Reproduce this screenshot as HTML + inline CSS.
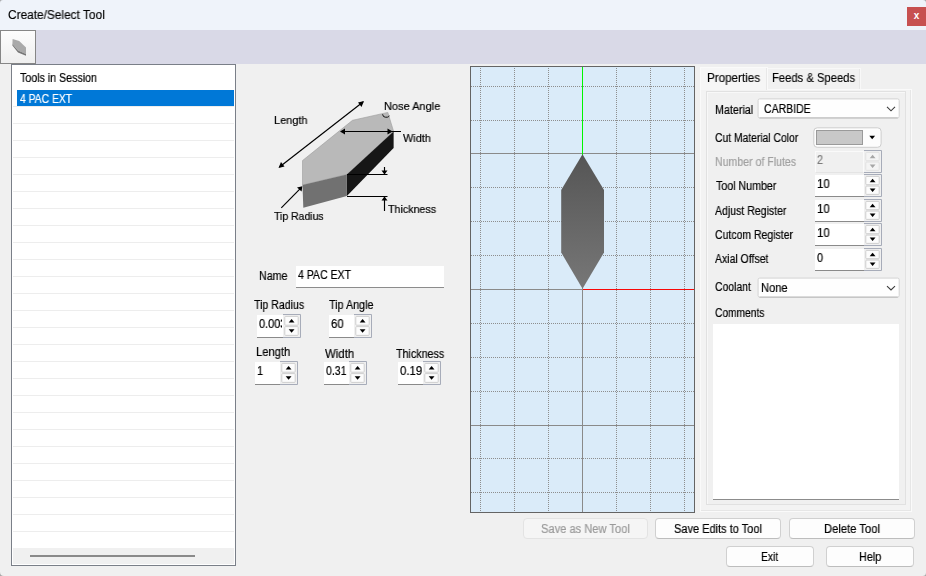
<!DOCTYPE html>
<html lang="en">
<head>
<meta charset="utf-8">
<title>Create/Select Tool</title>
<style>
*{box-sizing:border-box;margin:0;padding:0}
html,body{width:926px;height:576px;overflow:hidden;background:#f0f0f0}
body{position:relative;font-family:"Liberation Sans",sans-serif;font-size:12px;color:#000}
.a{position:absolute}
.t{position:absolute;will-change:transform;-webkit-text-stroke:0.2px currentColor;white-space:nowrap;line-height:14px;height:14px;transform-origin:0 50%}
.titlebar{left:0;top:0;width:926px;height:30px;background:#eff3fa}
.title{left:9px;top:8px;font-size:12.5px}
.close{left:907px;top:7px;width:19px;height:19px;background:#c75050;color:#fff;font-weight:bold;font-size:10px;text-align:center;line-height:17px}
.strip{left:0;top:30px;width:926px;height:34px;background:#d9d9e7}
.tab0{left:0;top:30px;width:36px;height:34px;border:1px solid #868686;background:linear-gradient(#fcfcfc,#efefef)}
.list{left:11px;top:64px;width:225px;height:502px;background:#fff;border:1px solid #7a7f88}
.row{position:absolute;left:1px;width:221px;height:1px;background:#ededed}
.sel{left:17px;top:90px;width:217px;height:16px;background:#0078d7}
.sbar{left:13px;top:548px;width:221px;height:16px;background:#f0f0f0}
.thumb{left:30px;top:555px;width:165px;height:2px;background:#8a8a8a}
.inp{position:absolute;background:#fff;border-bottom:1px solid #8c8c8c}
.grid{left:470px;top:66px;width:225px;height:447px;background:#daebf9;border:1px solid #646464;overflow:hidden}
.btn{position:absolute;height:21px;border:1px solid #d0d0d0;border-radius:4px;background:#fdfdfd;text-align:center;line-height:18px;white-space:nowrap;border-bottom-color:#bdbdbd}
.btn.dis{color:#9a9a9a;background:#f5f5f5;border-color:#e3e3e3}
.dd{position:absolute;height:20px;border:1px solid #d2d2d2;border-radius:2px;background:#fff}
.gray{color:#a0a0a0}
</style>
</head>
<body>
<div class="a titlebar"></div>
<div class="a close">x</div>
<div class="a strip"></div>
<div class="a tab0">
<svg class="a" style="left:0;top:0" width="34" height="32" viewBox="1 31 34 32"><polygon points="12.6,39 19.2,41 26,47.6 26,54 18,50.6 12.4,44" fill="#a9a9a9"/><polygon points="12.4,44 18,50.6 26,54 26,55.8 18,52.4 12.4,45.6" fill="#777"/></svg>
</div>

<!-- list -->
<div class="a list" id="list">
<div class="row" style="top:41px"></div>
<div class="row" style="top:58px"></div>
<div class="row" style="top:75px"></div>
<div class="row" style="top:92px"></div>
<div class="row" style="top:109px"></div>
<div class="row" style="top:126px"></div>
<div class="row" style="top:143px"></div>
<div class="row" style="top:160px"></div>
<div class="row" style="top:177px"></div>
<div class="row" style="top:194px"></div>
<div class="row" style="top:211px"></div>
<div class="row" style="top:228px"></div>
<div class="row" style="top:245px"></div>
<div class="row" style="top:262px"></div>
<div class="row" style="top:279px"></div>
<div class="row" style="top:296px"></div>
<div class="row" style="top:313px"></div>
<div class="row" style="top:330px"></div>
<div class="row" style="top:347px"></div>
<div class="row" style="top:364px"></div>
<div class="row" style="top:381px"></div>
<div class="row" style="top:398px"></div>
<div class="row" style="top:415px"></div>
<div class="row" style="top:432px"></div>
<div class="row" style="top:449px"></div>
<div class="row" style="top:466px"></div>
</div>
<div class="a sel"></div>
<div class="a sbar"></div><div class="a thumb"></div>

<!-- diagram -->
<svg class="a" id="diag" style="left:240px;top:80px" width="230" height="160" viewBox="240 80 230 160">
<polygon points="302.5,160.6 352.5,120.3 387.8,112.4 393.6,131.4 346.9,174.4 302.5,185" fill="#b9b9b9" stroke="#9c9c9c" stroke-width="0.6"/>
<polygon points="393.6,131.4 393.6,148 346.9,196.1 346.9,174.4" fill="#161616"/>
<polygon points="302.5,185 346.9,174.4 346.9,196.1 303.3,207.8" fill="#717171"/>
<g stroke="#000" stroke-width="1.15" fill="none">
<line x1="279.5" y1="167" x2="363" y2="102"/>
<line x1="341" y1="131.5" x2="401" y2="131.5"/>
<line x1="347" y1="174.5" x2="387.5" y2="174.5"/>
<line x1="347" y1="196.5" x2="387.5" y2="196.5"/>
<line x1="384.5" y1="167" x2="384.5" y2="174"/>
<line x1="384.5" y1="197" x2="384.5" y2="211"/>
<line x1="281.3" y1="207.8" x2="301" y2="187.8"/>
<path d="M382.6,114.3 Q383,117.2 385.3,117.2 L387.4,117.2 Q388.9,117 389.2,115.6" stroke="#111" stroke-width="1"/>
</g>
<g fill="#000">
<polygon points="364,101 361.5,107 358,102.5"/>
<polygon points="278.5,168 281,162 284.5,166.5"/>
<polygon points="340,131.5 345,128.5 345,134.5"/>
<polygon points="392.5,131.5 387.5,128.5 387.5,134.5"/>
<polygon points="384.5,174.5 381.5,170.5 387.5,170.5"/>
<polygon points="384.5,196.5 381.5,200.5 387.5,200.5"/>
<polygon points="302.3,186.3 301.6,191.6 297,187.6"/>
</g>
</svg>

<!-- form -->
<div class="inp" style="left:296px;top:266px;width:148px;height:22px"></div>






<!-- grid -->
<div class="a grid" id="grid">
<svg class="a" style="left:0;top:0" width="223" height="445" viewBox="471 67 223 445" shape-rendering="crispEdges">
<defs><linearGradient id="g" x1="0" y1="0" x2="0" y2="1"><stop offset="0" stop-color="#555555"/><stop offset="1" stop-color="#777777"/></linearGradient></defs>
<g stroke="#8e8e8e" stroke-width="1" stroke-dasharray="1 1">
<line x1="480.5" y1="68" x2="480.5" y2="512"/><line x1="514.5" y1="68" x2="514.5" y2="512"/><line x1="548.5" y1="68" x2="548.5" y2="512"/><line x1="616.5" y1="68" x2="616.5" y2="512"/><line x1="650.5" y1="68" x2="650.5" y2="512"/><line x1="684.5" y1="68" x2="684.5" y2="512"/>
<line x1="471" y1="86.5" x2="694" y2="86.5"/><line x1="471" y1="120.5" x2="694" y2="120.5"/><line x1="471" y1="187.5" x2="694" y2="187.5"/><line x1="471" y1="221.5" x2="694" y2="221.5"/><line x1="471" y1="255.5" x2="694" y2="255.5"/><line x1="471" y1="323.5" x2="694" y2="323.5"/><line x1="471" y1="357.5" x2="694" y2="357.5"/><line x1="471" y1="391.5" x2="694" y2="391.5"/><line x1="471" y1="458.5" x2="694" y2="458.5"/><line x1="471" y1="492.5" x2="694" y2="492.5"/>
</g>
<g stroke="#8a8a8a" stroke-width="1">
<line x1="471" y1="153.5" x2="694" y2="153.5"/><line x1="471" y1="289.5" x2="694" y2="289.5"/><line x1="471" y1="425.5" x2="694" y2="425.5"/>
<line x1="582.5" y1="68" x2="582.5" y2="512"/>
</g>
<line x1="582.5" y1="67" x2="582.5" y2="154.5" stroke="#00f500" stroke-width="1"/>
<line x1="583" y1="289.5" x2="694" y2="289.5" stroke="#f80808" stroke-width="1"/>
<polygon shape-rendering="auto" points="582.5,154.3 604,190 604,252.5 582.5,288.8 561.2,252.5 561.2,190" fill="url(#g)"/>
</svg>
</div>

<!-- right panel -->
<div class="a" style="left:700px;top:89px;width:212px;height:423px;border:1px solid #fafafa;box-shadow:inset -1px -1px 0 #e6e6e6;background:#f3f3f3"></div>
<div class="a" style="left:706px;top:91px;width:200px;height:414px;border:1px solid #e1e1e1;box-shadow:inset 1px 1px 0 #f8f8f8;background:#f0f0f0"></div>
<div class="a" style="left:767px;top:68px;width:94px;height:21px;border:1px solid #f8f8f8;border-bottom:0;box-shadow:inset -1px 0 0 #e6e6e6;background:#f1f1f1"></div>
<div class="a" style="left:700px;top:67px;width:68px;height:23px;border:1px solid #fafafa;border-bottom:0;box-shadow:inset -1px 0 0 #e8e8e8;background:#f6f6f6"></div>

<svg class="a" style="left:755px;top:95px" width="148" height="26" viewBox="755 95 148 26"><rect x="758.1" y="98.90" width="141.1" height="19.05" rx="1.6" fill="#fefefe" stroke="#d3d3d3"/><line x1="759.5" y1="117.95" x2="897.8" y2="117.95" stroke="#b9b9b9"/><polyline points="887,106.90 891,110.80 895,106.90" fill="none" stroke="#3c3c3c" stroke-width="1.1"/></svg>

<svg class="a" style="left:810px;top:124px" width="76" height="28" viewBox="810 124 76 28"><rect x="813.8" y="127.8" width="67.3" height="19.5" rx="3.5" fill="#fdfdfd" stroke="#cdcdcd" stroke-width="1"/><polygon points="869.3,135.7 875.1,135.7 872.2,139.2" fill="#000"/></svg>
<div class="a" style="left:816px;top:130px;width:47px;height:15px;border:1px solid #9a9a9a;background:#c8c8c8"></div>







<svg class="a" style="left:755px;top:274px" width="148" height="26" viewBox="755 274 148 26"><rect x="758.1" y="278.10" width="141.1" height="19.05" rx="1.6" fill="#fefefe" stroke="#d3d3d3"/><line x1="759.5" y1="297.15" x2="897.8" y2="297.15" stroke="#b9b9b9"/><polyline points="887,286.10 891,290.00 895,286.10" fill="none" stroke="#3c3c3c" stroke-width="1.1"/></svg>

<div class="inp" style="left:713px;top:324px;width:186px;height:176px"></div>

<!-- buttons -->
<div class="btn dis" style="left:523px;top:518px;width:125px"></div>
<div class="btn" style="left:655px;top:518px;width:126px"></div>
<div class="btn" style="left:789px;top:518px;width:126px"></div>
<div class="btn" style="left:726px;top:546px;width:88px"></div>
<div class="btn" style="left:826px;top:546px;width:88px"></div>

<svg class="a" style="left:0;top:0;pointer-events:none" width="926" height="576"><g fill="#8f8f8f" opacity="0.75"><path d="M0,0 H3 A3,3 0 0 0 0,3Z"/><path d="M926,0 V3 A3,3 0 0 0 923,0Z"/><path d="M0,576 V572 A4,4 0 0 0 4,576Z"/><path d="M926,576 H922.5 A3.5,3.5 0 0 0 926,572.5Z"/></g></svg>
<div class="a" style="left:257px;top:315px;width:26px;height:23px;background:#fff;border-bottom:1px solid #8a8a8a"></div><svg class="a" style="left:283px;top:314px" width="18" height="24"><path d="M0,0.5 H17.5 V23.5 H0" fill="none" stroke="#a7acb9" stroke-width="1"/><rect x="1.8" y="2.4" width="13.4" height="8.8" rx="0.8" fill="#fcfcfc" stroke="#cbcbcb" stroke-width="0.9"/><rect x="1.8" y="12.6" width="13.4" height="8.8" rx="0.8" fill="#fcfcfc" stroke="#cbcbcb" stroke-width="0.9"/><polygon points="5.7,8.4 11.5,8.4 8.6,4.9" fill="#000"/><polygon points="5.7,15.3 11.5,15.3 8.6,18.8" fill="#000"/></svg>
<div class="a" style="left:329px;top:315px;width:25px;height:23px;background:#fff;border-bottom:1px solid #8a8a8a"></div><svg class="a" style="left:354px;top:314px" width="18" height="24"><path d="M0,0.5 H17.5 V23.5 H0" fill="none" stroke="#a7acb9" stroke-width="1"/><rect x="1.8" y="2.4" width="13.4" height="8.8" rx="0.8" fill="#fcfcfc" stroke="#cbcbcb" stroke-width="0.9"/><rect x="1.8" y="12.6" width="13.4" height="8.8" rx="0.8" fill="#fcfcfc" stroke="#cbcbcb" stroke-width="0.9"/><polygon points="5.7,8.4 11.5,8.4 8.6,4.9" fill="#000"/><polygon points="5.7,15.3 11.5,15.3 8.6,18.8" fill="#000"/></svg>
<div class="a" style="left:255px;top:362px;width:25px;height:23px;background:#fff;border-bottom:1px solid #8a8a8a"></div><svg class="a" style="left:280px;top:361px" width="18" height="24"><path d="M0,0.5 H17.5 V23.5 H0" fill="none" stroke="#a7acb9" stroke-width="1"/><rect x="1.8" y="2.4" width="13.4" height="8.8" rx="0.8" fill="#fcfcfc" stroke="#cbcbcb" stroke-width="0.9"/><rect x="1.8" y="12.6" width="13.4" height="8.8" rx="0.8" fill="#fcfcfc" stroke="#cbcbcb" stroke-width="0.9"/><polygon points="5.7,8.4 11.5,8.4 8.6,4.9" fill="#000"/><polygon points="5.7,15.3 11.5,15.3 8.6,18.8" fill="#000"/></svg>
<div class="a" style="left:324px;top:362px;width:25px;height:23px;background:#fff;border-bottom:1px solid #8a8a8a"></div><svg class="a" style="left:349px;top:361px" width="18" height="24"><path d="M0,0.5 H17.5 V23.5 H0" fill="none" stroke="#a7acb9" stroke-width="1"/><rect x="1.8" y="2.4" width="13.4" height="8.8" rx="0.8" fill="#fcfcfc" stroke="#cbcbcb" stroke-width="0.9"/><rect x="1.8" y="12.6" width="13.4" height="8.8" rx="0.8" fill="#fcfcfc" stroke="#cbcbcb" stroke-width="0.9"/><polygon points="5.7,8.4 11.5,8.4 8.6,4.9" fill="#000"/><polygon points="5.7,15.3 11.5,15.3 8.6,18.8" fill="#000"/></svg>
<div class="a" style="left:398px;top:362px;width:25px;height:23px;background:#fff;border-bottom:1px solid #8a8a8a"></div><svg class="a" style="left:423px;top:361px" width="18" height="24"><path d="M0,0.5 H17.5 V23.5 H0" fill="none" stroke="#a7acb9" stroke-width="1"/><rect x="1.8" y="2.4" width="13.4" height="8.8" rx="0.8" fill="#fcfcfc" stroke="#cbcbcb" stroke-width="0.9"/><rect x="1.8" y="12.6" width="13.4" height="8.8" rx="0.8" fill="#fcfcfc" stroke="#cbcbcb" stroke-width="0.9"/><polygon points="5.7,8.4 11.5,8.4 8.6,4.9" fill="#000"/><polygon points="5.7,15.3 11.5,15.3 8.6,18.8" fill="#000"/></svg>
<div class="a" style="left:815px;top:151px;width:49px;height:22px;background:#f0f0f0;border:1px solid #fafafa;border-bottom:1px solid #e4e4e4"></div><svg class="a" style="left:864px;top:150px" width="18" height="23"><path d="M0,0.5 H17.5 V22.5 H0" fill="none" stroke="#a7acb9" stroke-width="1"/><rect x="1.8" y="2.4" width="13.4" height="8.3" rx="0.8" fill="#f4f4f4" stroke="#e0e0e0" stroke-width="0.9"/><rect x="1.8" y="12.1" width="13.4" height="8.3" rx="0.8" fill="#f4f4f4" stroke="#e0e0e0" stroke-width="0.9"/><polygon points="5.7,8.15 11.5,8.15 8.6,4.65" fill="#a6a6a6"/><polygon points="5.7,14.55 11.5,14.55 8.6,18.05" fill="#a6a6a6"/></svg>
<div class="a" style="left:815px;top:175px;width:49px;height:22px;background:#fff;border-bottom:1px solid #8a8a8a"></div><svg class="a" style="left:864px;top:174px" width="18" height="23"><path d="M0,0.5 H17.5 V22.5 H0" fill="none" stroke="#a7acb9" stroke-width="1"/><rect x="1.8" y="2.4" width="13.4" height="8.3" rx="0.8" fill="#fcfcfc" stroke="#cbcbcb" stroke-width="0.9"/><rect x="1.8" y="12.1" width="13.4" height="8.3" rx="0.8" fill="#fcfcfc" stroke="#cbcbcb" stroke-width="0.9"/><polygon points="5.7,8.15 11.5,8.15 8.6,4.65" fill="#000"/><polygon points="5.7,14.55 11.5,14.55 8.6,18.05" fill="#000"/></svg>
<div class="a" style="left:815px;top:200px;width:49px;height:22px;background:#fff;border-bottom:1px solid #8a8a8a"></div><svg class="a" style="left:864px;top:199px" width="18" height="23"><path d="M0,0.5 H17.5 V22.5 H0" fill="none" stroke="#a7acb9" stroke-width="1"/><rect x="1.8" y="2.4" width="13.4" height="8.3" rx="0.8" fill="#fcfcfc" stroke="#cbcbcb" stroke-width="0.9"/><rect x="1.8" y="12.1" width="13.4" height="8.3" rx="0.8" fill="#fcfcfc" stroke="#cbcbcb" stroke-width="0.9"/><polygon points="5.7,8.15 11.5,8.15 8.6,4.65" fill="#000"/><polygon points="5.7,14.55 11.5,14.55 8.6,18.05" fill="#000"/></svg>
<div class="a" style="left:815px;top:224px;width:49px;height:22px;background:#fff;border-bottom:1px solid #8a8a8a"></div><svg class="a" style="left:864px;top:223px" width="18" height="23"><path d="M0,0.5 H17.5 V22.5 H0" fill="none" stroke="#a7acb9" stroke-width="1"/><rect x="1.8" y="2.4" width="13.4" height="8.3" rx="0.8" fill="#fcfcfc" stroke="#cbcbcb" stroke-width="0.9"/><rect x="1.8" y="12.1" width="13.4" height="8.3" rx="0.8" fill="#fcfcfc" stroke="#cbcbcb" stroke-width="0.9"/><polygon points="5.7,8.15 11.5,8.15 8.6,4.65" fill="#000"/><polygon points="5.7,14.55 11.5,14.55 8.6,18.05" fill="#000"/></svg>
<div class="a" style="left:815px;top:249px;width:49px;height:22px;background:#fff;border-bottom:1px solid #8a8a8a"></div><svg class="a" style="left:864px;top:248px" width="18" height="23"><path d="M0,0.5 H17.5 V22.5 H0" fill="none" stroke="#a7acb9" stroke-width="1"/><rect x="1.8" y="2.4" width="13.4" height="8.3" rx="0.8" fill="#fcfcfc" stroke="#cbcbcb" stroke-width="0.9"/><rect x="1.8" y="12.1" width="13.4" height="8.3" rx="0.8" fill="#fcfcfc" stroke="#cbcbcb" stroke-width="0.9"/><polygon points="5.7,8.15 11.5,8.15 8.6,4.65" fill="#000"/><polygon points="5.7,14.55 11.5,14.55 8.6,18.05" fill="#000"/></svg>
<div class="t" id="title" style="left:8.18px;top:7.70px;font-size:12px;transform:scaleX(0.9898);-webkit-text-stroke:0.15px #000">Create/Select Tool</div>
<div class="t" id="tis" style="left:19.60px;top:70.50px;font-size:12px;transform:scaleX(0.8875);">Tools in Session</div>
<div class="t" id="selt" style="left:19.91px;top:91.60px;font-size:12px;transform:scaleX(0.8589);color:#fff">4 PAC EXT</div>
<div class="t" id="d1" style="left:274.00px;top:112.80px;font-size:11.5px;transform:scaleX(0.9531);">Length</div>
<div class="t" id="d2" style="left:384.15px;top:98.90px;font-size:11.5px;transform:scaleX(0.9559);">Nose Angle</div>
<div class="t" id="d3" style="left:402.94px;top:130.90px;font-size:11.5px;transform:scaleX(0.9482);">Width</div>
<div class="t" id="d4" style="left:387.70px;top:201.70px;font-size:11.5px;transform:scaleX(0.9293);">Thickness</div>
<div class="t" id="d5" style="left:273.55px;top:208.50px;font-size:11.5px;transform:scaleX(0.9091);">Tip Radius</div>
<div class="t" id="f1" style="left:259.10px;top:268.90px;font-size:12px;transform:scaleX(0.8922);">Name</div>
<div class="t" id="f2" style="left:298.30px;top:268.00px;font-size:12px;transform:scaleX(0.8739);">4 PAC EXT</div>
<div class="t" id="f3" style="left:253.88px;top:297.60px;font-size:12px;transform:scaleX(0.8803);">Tip Radius</div>
<div class="t" id="f5" style="left:328.50px;top:297.60px;font-size:12px;transform:scaleX(0.8951);">Tip Angle</div>
<div class="t" id="f6" style="left:331.37px;top:317.40px;font-size:12px;transform:scaleX(0.9445);">60</div>
<div class="t" id="f7" style="left:255.81px;top:344.80px;font-size:12px;transform:scaleX(0.9340);">Length</div>
<div class="t" id="f8" style="left:256.87px;top:363.60px;font-size:12px;transform:scaleX(0.9000);">1</div>
<div class="t" id="f9" style="left:325.25px;top:347.30px;font-size:12px;transform:scaleX(0.9509);">Width</div>
<div class="t" id="f10" style="left:326.13px;top:363.60px;font-size:12px;transform:scaleX(0.8775);">0.31</div>
<div class="t" id="f11" style="left:395.88px;top:347.30px;font-size:12px;transform:scaleX(0.8922);">Thickness</div>
<div class="t" id="f12" style="left:399.67px;top:363.60px;font-size:12px;transform:scaleX(0.9460);">0.19</div>
<div class="t" id="p1" style="left:706.62px;top:70.80px;font-size:12px;transform:scaleX(0.9695);-webkit-text-stroke:0.15px #000">Properties</div>
<div class="t" id="p2" style="left:772.01px;top:70.80px;font-size:12px;transform:scaleX(0.9359);-webkit-text-stroke:0.15px #000">Feeds &amp; Speeds</div>
<div class="t" id="r1" style="left:714.83px;top:102.80px;font-size:12px;transform:scaleX(0.8941);">Material</div>
<div class="t" id="r2" style="left:764.05px;top:101.80px;font-size:12px;transform:scaleX(0.8754);">CARBIDE</div>
<div class="t" id="r3" style="left:715.18px;top:130.70px;font-size:12px;transform:scaleX(0.8606);">Cut Material Color</div>
<div class="t" id="r4" style="left:714.75px;top:154.60px;font-size:12px;transform:scaleX(0.8812);color:#a0a0a0">Number of Flutes</div>
<div class="t" id="r5" style="left:817.46px;top:152.75px;font-size:12px;transform:scaleX(0.9000);color:#7c7c7c">2</div>
<div class="t" id="r6" style="left:715.69px;top:178.80px;font-size:12px;transform:scaleX(0.8878);">Tool Number</div>
<div class="t" id="r7" style="left:817.03px;top:176.60px;font-size:12px;transform:scaleX(0.9497);">10</div>
<div class="t" id="r8" style="left:715.05px;top:204.40px;font-size:12px;transform:scaleX(0.8784);">Adjust Register</div>
<div class="t" id="r9" style="left:817.03px;top:202.20px;font-size:12px;transform:scaleX(0.9497);">10</div>
<div class="t" id="r10" style="left:715.23px;top:227.70px;font-size:12px;transform:scaleX(0.8732);">Cutcom Register</div>
<div class="t" id="r11" style="left:817.03px;top:225.50px;font-size:12px;transform:scaleX(0.9497);">10</div>
<div class="t" id="r12" style="left:714.95px;top:251.80px;font-size:12px;transform:scaleX(0.8733);">Axial Offset</div>
<div class="t" id="r13" style="left:817.21px;top:250.80px;font-size:12px;transform:scaleX(0.9000);">0</div>
<div class="t" id="r14" style="left:715.28px;top:279.80px;font-size:12px;transform:scaleX(0.8663);">Coolant</div>
<div class="t" id="r15" style="left:761.37px;top:280.50px;font-size:12px;transform:scaleX(0.9265);">None</div>
<div class="t" id="r16" style="left:715.21px;top:305.50px;font-size:12px;transform:scaleX(0.8513);">Comments</div>
<div class="t" id="b1" style="left:540.81px;top:521.60px;font-size:12px;transform:scaleX(0.9269);color:#9a9a9a">Save as New Tool</div>
<div class="t" id="b2" style="left:673.74px;top:521.60px;font-size:12px;transform:scaleX(0.9172);">Save Edits to Tool</div>
<div class="t" id="b3" style="left:823.73px;top:521.80px;font-size:12px;transform:scaleX(0.9349);">Delete Tool</div>
<div class="t" id="b4" style="left:761.41px;top:550.40px;font-size:12px;transform:scaleX(0.8566);">Exit</div>
<div class="t" id="b5" style="left:858.69px;top:550.10px;font-size:12px;transform:scaleX(0.9020);">Help</div>
<div class="t" id="f4" style="left:259.15px;top:316.6px;width:25px;overflow:hidden;transform:scaleX(0.91)">0.003</div>
</body>
</html>
